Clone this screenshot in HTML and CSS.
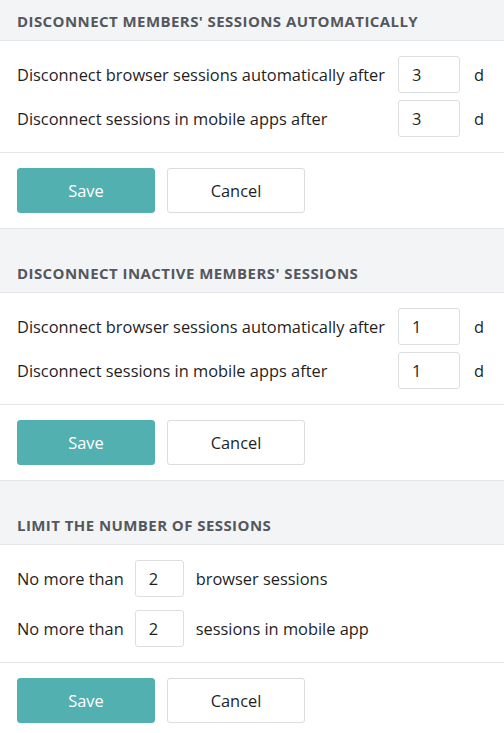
FILE: index.html
```html
<!DOCTYPE html>
<html>
<head>
<meta charset="utf-8">
<link rel="stylesheet" href="styles.css">
</head>
<body>
<div class="page">
  <section class="section first">
    <div class="section-header"><h2>Disconnect members' sessions automatically</h2></div>
    <div class="section-body">
      <div class="row"><span class="label wide">Disconnect browser sessions automatically after</span><input class="num" value="3"><span class="unit">d</span></div>
      <div class="row"><span class="label wide">Disconnect sessions in mobile apps after</span><input class="num" value="3"><span class="unit">d</span></div>
    </div>
    <div class="actions"><button class="btn btn-save">Save</button><button class="btn btn-cancel">Cancel</button></div>
  </section>
  <section class="section">
    <div class="section-header"><h2>Disconnect inactive members' sessions</h2></div>
    <div class="section-body">
      <div class="row"><span class="label wide">Disconnect browser sessions automatically after</span><input class="num" value="1"><span class="unit">d</span></div>
      <div class="row"><span class="label wide">Disconnect sessions in mobile apps after</span><input class="num" value="1"><span class="unit">d</span></div>
    </div>
    <div class="actions"><button class="btn btn-save">Save</button><button class="btn btn-cancel">Cancel</button></div>
  </section>
  <section class="section">
    <div class="section-header"><h2>Limit the number of sessions</h2></div>
    <div class="section-body loose">
      <div class="row"><span class="label">No more than</span><input class="num small" value="2"><span class="after">browser sessions</span></div>
      <div class="row"><span class="label">No more than</span><input class="num small" value="2"><span class="after">sessions in mobile app</span></div>
    </div>
    <div class="actions"><button class="btn btn-save">Save</button><button class="btn btn-cancel">Cancel</button></div>
  </section>
</div>
</body>
</html>
```
FILE: styles.css
```css
* { box-sizing: border-box; }
html, body { margin: 0; padding: 0; background: #fff; }
body {
  font-family: "Open Sans", "Noto Sans", sans-serif;
  font-size: 16.4px;
  color: #1f1f1f;
  overflow: hidden;
}
.page { margin-top: -23px; }
.section { border-bottom: 1px solid #e4e6e9; }
.section-header {
  height: 64px;
  background: #f3f4f6;
  border-bottom: 1px solid #e4e6e9;
  display: flex;
  align-items: flex-end;
  padding: 0 17px 9px;
}
.section-header h2 {
  margin: 0;
  font-size: 15px;
  font-weight: 700;
  letter-spacing: 0.43px;
  text-transform: uppercase;
  color: #54585d;
  line-height: 20px;
}
.section-body {
  padding: 15px 17px 15px;
  display: flex;
  flex-direction: column;
  gap: 7px;
  border-bottom: 1px solid #e4e6e9;
}
.section-body.loose { gap: 13px; }
.row { display: flex; align-items: center; height: 37px; }
.label { margin-right: 11px; flex: none; }
.label.wide { width: 370px; }
.num {
  flex: none;
  width: 62px;
  height: 37px;
  border: 1px solid #dcdfe2;
  border-radius: 3px;
  padding: 0 0 0 13px;
  font: inherit;
  color: #1f1f1f;
  outline: none;
}
.num.small { width: 49px; padding-left: 13px; }
.unit { margin-left: 14px; }
.after { margin-left: 12px; }
.actions { display: flex; gap: 12px; padding: 15px 17px; }
.btn {
  width: 138px;
  height: 45px;
  border-radius: 3px;
  font: inherit;
  font-size: 16.4px;
  cursor: pointer;
}
.btn-save { background: #52b0b1; border: 1px solid #52b0b1; color: #fff; }
.btn-cancel { background: #fff; border: 1px solid #dcdcdc; color: #1f1f1f; }
```
